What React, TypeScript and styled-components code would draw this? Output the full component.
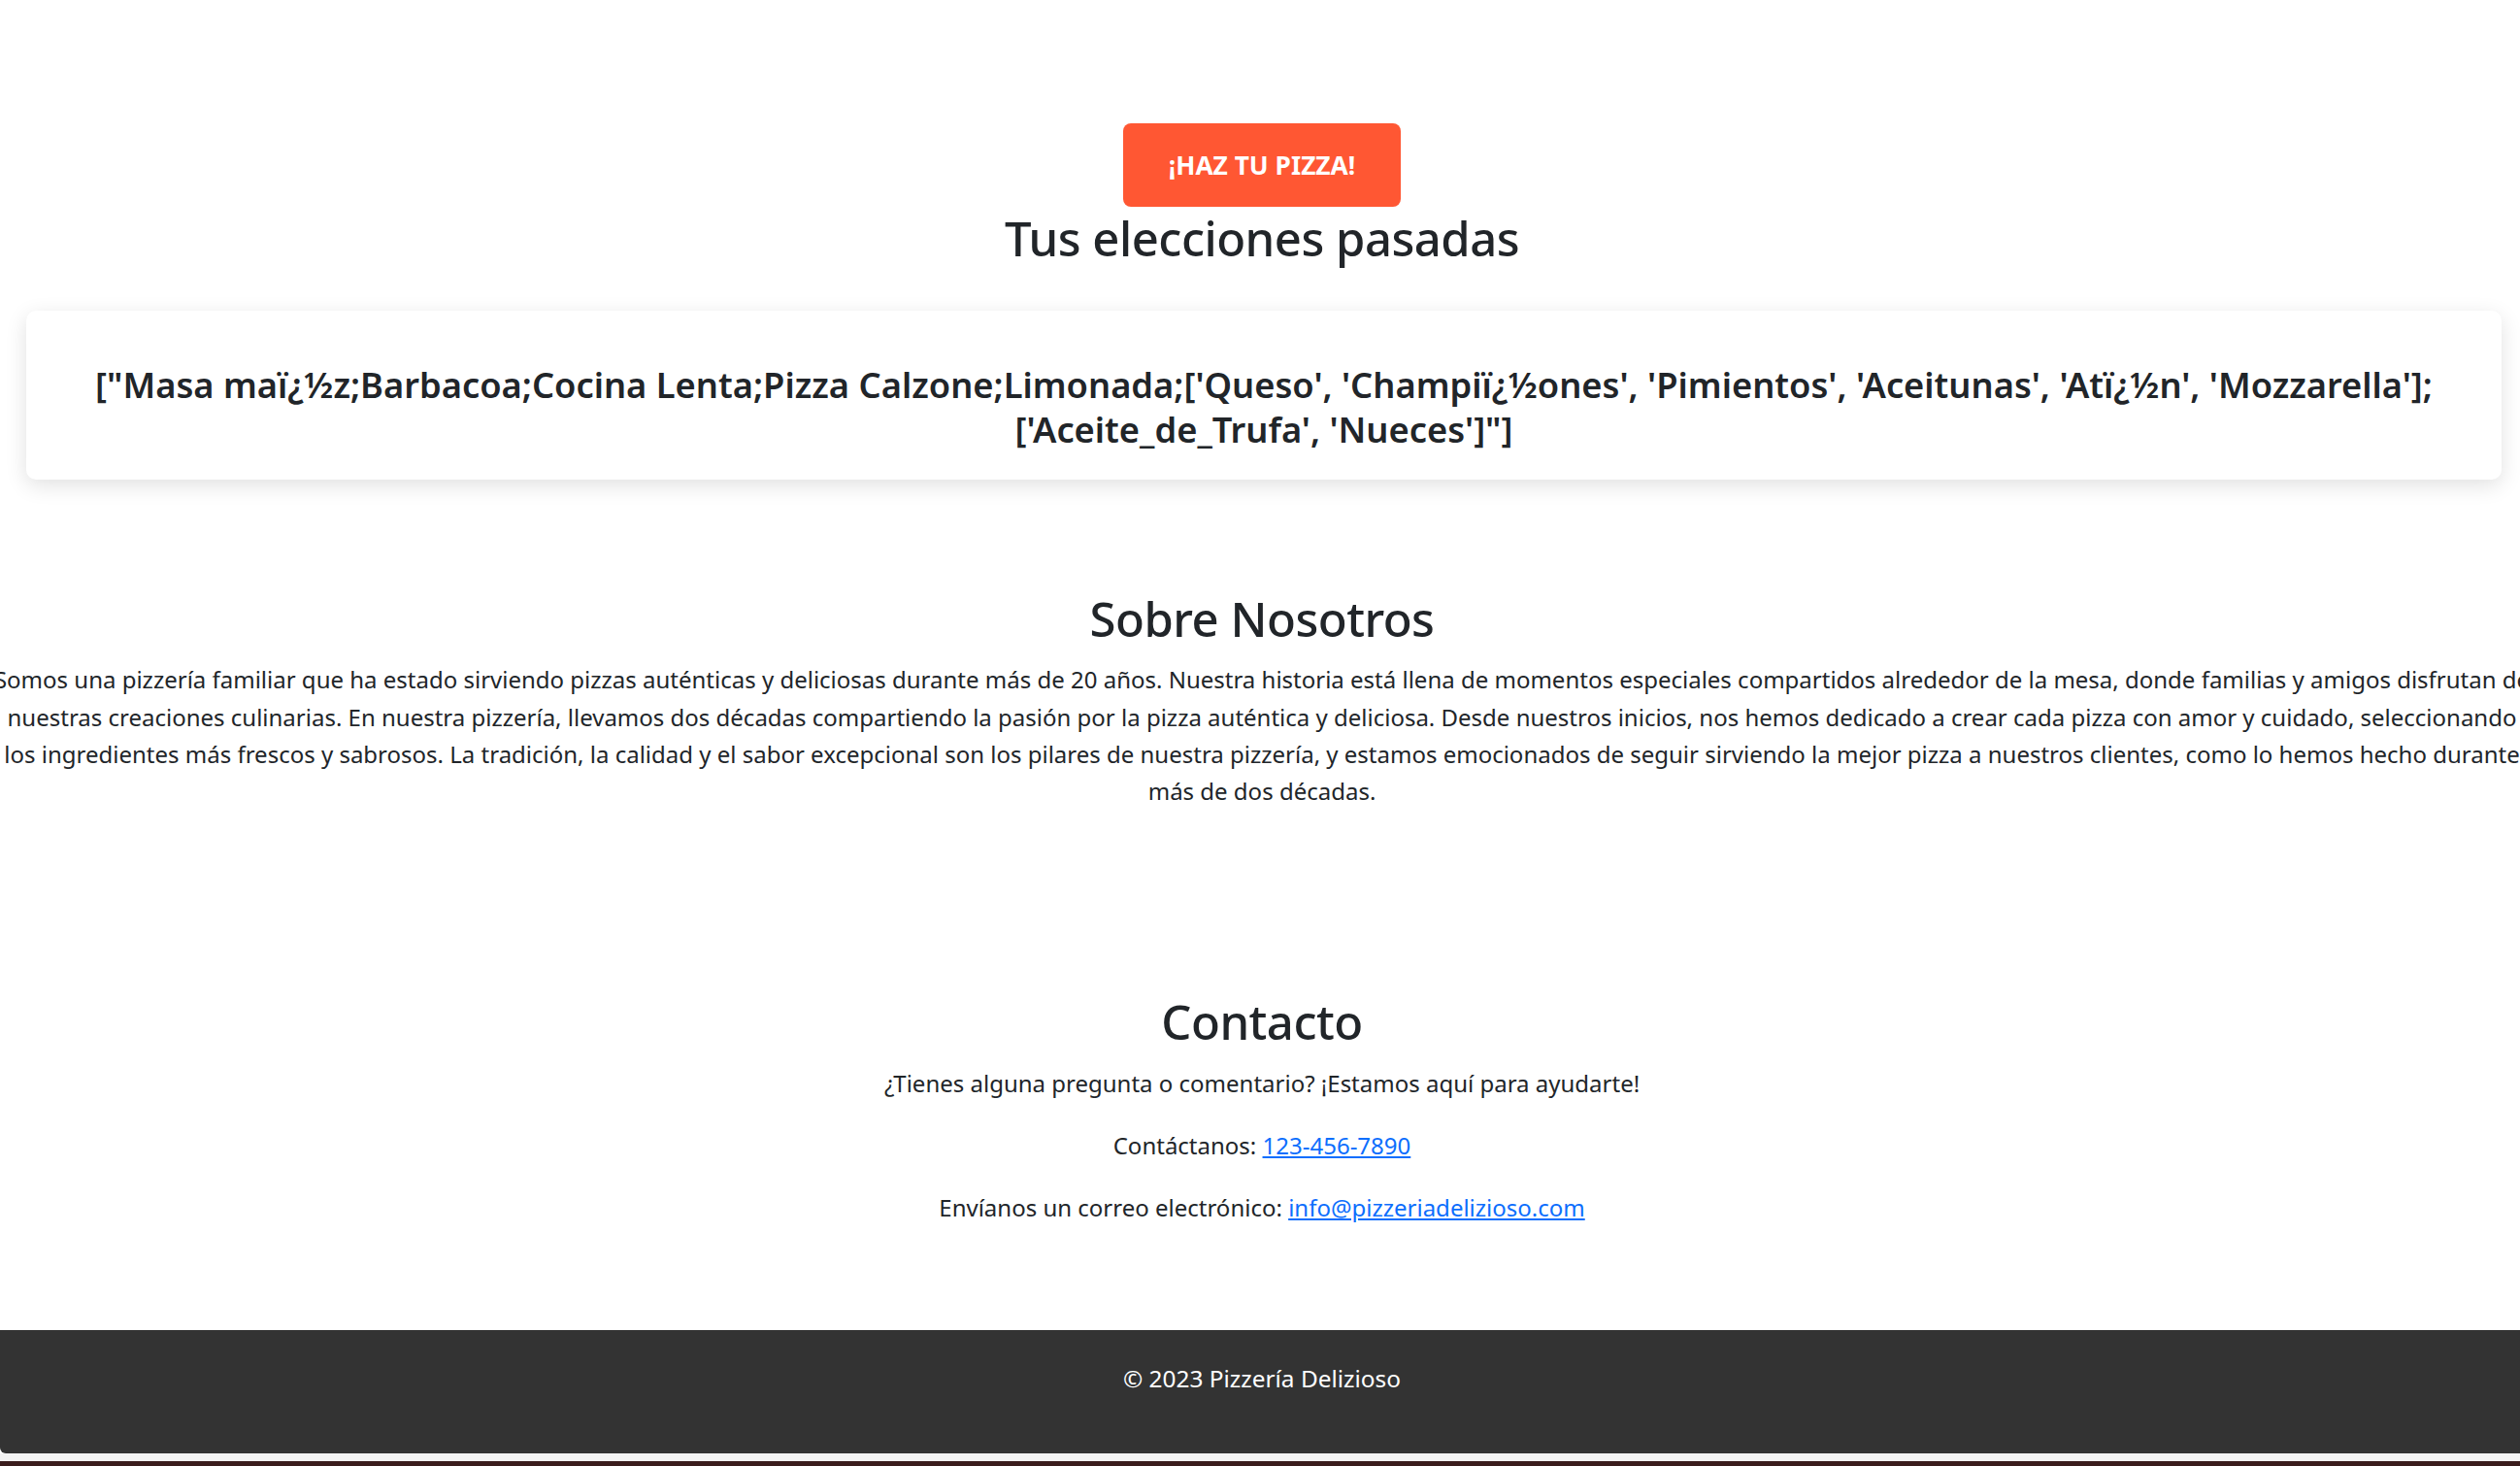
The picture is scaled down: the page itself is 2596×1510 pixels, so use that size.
import React from "react";
import styled, { createGlobalStyle } from "styled-components";

const GlobalStyle = createGlobalStyle`
  html, body {
    margin: 0;
    padding: 0;
    background: #ffffff;
  }
  body {
    font-family: "Noto Sans", "Open Sans", sans-serif;
    color: #212529;
    overflow-x: hidden;
  }
  * { box-sizing: border-box; }
`;

const Page = styled.div`
  display: flex;
  flex-direction: column;
  min-height: 1510px;
`;

const Main = styled.main`
  display: flex;
  flex-direction: column;
  align-items: center;
  padding: 127px 0 0 4px;
`;

const PizzaButton = styled.button`
  width: 286px;
  height: 86px;
  border: none;
  border-radius: 8px;
  background: #ff5733;
  color: #ffffff;
  font-family: "Noto Sans", sans-serif;
  font-size: 26.3px;
  font-weight: 700;
  cursor: pointer;
`;

const SectionTitle = styled.h2<{ $top: number }>`
  margin: ${(p) => p.$top}px 0 0;
  font-size: 49px;
  font-weight: 500;
  letter-spacing: -0.5px;
  line-height: 63.6px;
  text-align: center;
  color: #212529;
`;

const HistoryCard = styled.div`
  align-self: stretch;
  margin: 42px 19px 0 23px;
  padding: 53px 20px 29px;
  background: #ffffff;
  border-radius: 10px;
  box-shadow: 0 6px 22px rgba(0, 0, 0, 0.12);
`;

const HistoryText = styled.h4`
  margin: 0;
  font-size: 36.3px;
  font-weight: 600;
  line-height: 46px;
  text-align: center;
  white-space: nowrap;
  color: #212529;
`;

const AboutRow = styled.div`
  align-self: stretch;
  display: flex;
  justify-content: center;
  margin-top: 12px;
`;

const AboutText = styled.p`
  flex: none;
  margin: 0;
  font-size: 24px;
  line-height: 38.4px;
  text-align: center;
  white-space: nowrap;
`;

const ContactBlock = styled.div`
  display: flex;
  flex-direction: column;
  align-items: center;
  margin-top: 13px;
`;

const ContactLine = styled.p`
  margin: 0 0 25.4px;
  font-size: 24px;
  line-height: 38.4px;
  text-align: center;
`;

const ContactLink = styled.a`
  color: #0d6efd;
  text-decoration: underline;
`;

const Footer = styled.footer`
  margin-top: 81px;
  background: #333333;
  color: #ffffff;
  padding: 31px 0 32px 4px;
  text-align: center;
  border-bottom-left-radius: 6px;
`;

const FooterText = styled.p`
  margin: 0 0 26px;
  font-size: 24.4px;
  line-height: 38.4px;
`;

const EdgeStrip = styled.div<{ $color: string; $h: number }>`
  height: ${(p) => p.$h}px;
  background: ${(p) => p.$color};
`;

export default function App() {
  return (
    <Page>
      <GlobalStyle />
      <Main>
        <PizzaButton>¡HAZ TU PIZZA!</PizzaButton>
        <SectionTitle $top={1}>Tus elecciones pasadas</SectionTitle>
        <HistoryCard>
          <HistoryText>
            ["Masa maï¿½z;Barbacoa;Cocina Lenta;Pizza Calzone;Limonada;['Queso', 'Champiï¿½ones', 'Pimientos', 'Aceitunas', 'Atï¿½n', 'Mozzarella'];
            <br />
            ['Aceite_de_Trufa', 'Nueces']"]
          </HistoryText>
        </HistoryCard>

        <SectionTitle $top={112}>Sobre Nosotros</SectionTitle>
        <AboutRow>
          <AboutText>
            Somos una pizzería familiar que ha estado sirviendo pizzas auténticas y deliciosas durante más de 20 años. Nuestra historia está llena de momentos especiales compartidos alrededor de la mesa, donde familias y amigos disfrutan de
            <br />
            nuestras creaciones culinarias. En nuestra pizzería, llevamos dos décadas compartiendo la pasión por la pizza auténtica y deliciosa. Desde nuestros inicios, nos hemos dedicado a crear cada pizza con amor y cuidado, seleccionando
            <br />
            los ingredientes más frescos y sabrosos. La tradición, la calidad y el sabor excepcional son los pilares de nuestra pizzería, y estamos emocionados de seguir sirviendo la mejor pizza a nuestros clientes, como lo hemos hecho durante
            <br />
            más de dos décadas.
          </AboutText>
        </AboutRow>

        <SectionTitle $top={186}>Contacto</SectionTitle>
        <ContactBlock>
          <ContactLine>¿Tienes alguna pregunta o comentario? ¡Estamos aquí para ayudarte!</ContactLine>
          <ContactLine>
            Contáctanos: <ContactLink href="#">123-456-7890</ContactLink>
          </ContactLine>
          <ContactLine>
            Envíanos un correo electrónico: <ContactLink href="#">info@pizzeriadelizioso.com</ContactLink>
          </ContactLine>
        </ContactBlock>
      </Main>
      <Footer>
        <FooterText>© 2023 Pizzería Delizioso</FooterText>
      </Footer>
      <EdgeStrip $color="#f3f3f3" $h={8} />
      <EdgeStrip $color="#3a1c1c" $h={7} />
    </Page>
  );
}
